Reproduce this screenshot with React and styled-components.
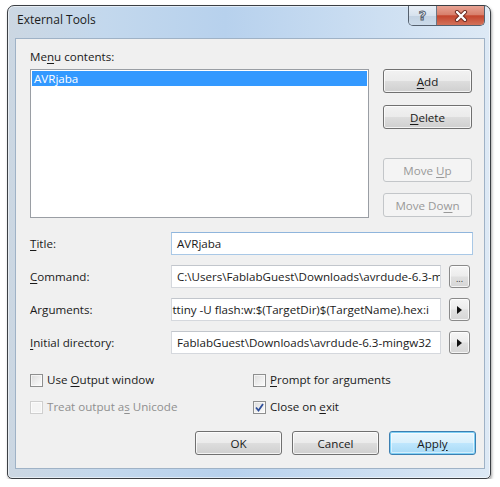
import React from "react";
import styled, { createGlobalStyle } from "styled-components";

const GlobalStyle = createGlobalStyle`
  body {
    margin: 0;
    background: #ffffff;
    font-family: "Open Sans", "Noto Sans", sans-serif;
    font-size: 11.6px;
    color: #1a1a1a;
  }
`;

const Mn = ({ children }) => <Under>{children}</Under>;

const TriangleIcon = () => (
  <svg width="5" height="8" viewBox="0 0 5 8">
    <path d="M0 0 L5 4 L0 8 Z" fill="#111" />
  </svg>
);

const CloseGlyph = () => (
  <svg width="16" height="12" viewBox="0 0 16 12">
    <path d="M4 2 L12 10 M12 2 L4 10" stroke="#6b2a20" strokeWidth="4.2" strokeLinecap="round" />
    <path d="M4 2 L12 10 M12 2 L4 10" stroke="#ffffff" strokeWidth="2.4" strokeLinecap="round" />
  </svg>
);

const CheckMark = () => (
  <svg width="9" height="9" viewBox="0 0 9 9">
    <path d="M1 4.5 L3.5 7.5 L8 1" stroke="#2f4f9a" strokeWidth="1.8" fill="none" />
  </svg>
);

const CheckBox = ({ checked, disabled, children }) => (
  <CheckLine $disabled={disabled}>
    <Box $disabled={disabled}>{checked && <CheckMark />}</Box>
    <span>{children}</span>
  </CheckLine>
);

export default function App() {
  return (
    <>
      <GlobalStyle />
      <Window>
        <TitleBar>
          <Caption>External Tools</Caption>
          <CaptionButtons>
            <HelpButton>?</HelpButton>
            <CloseButton>
              <CloseGlyph />
            </CloseButton>
          </CaptionButtons>
        </TitleBar>
        <Client>
          <Label>
            Me<Mn>n</Mn>u contents:
          </Label>
          <ListRow>
            <ListBox>
              <ListItem $selected>AVRjaba</ListItem>
            </ListBox>
            <SideButtons>
              <Button>
                <Mn>A</Mn>dd
              </Button>
              <Button $gap={12}>
                <Mn>D</Mn>elete
              </Button>
              <Button $gap={29} disabled>
                Move <Mn>U</Mn>p
              </Button>
              <Button $gap={11} disabled>
                Move Do<Mn>w</Mn>n
              </Button>
            </SideButtons>
          </ListRow>

          <Fields>
            <FieldLabel>
              <Mn>T</Mn>itle:
            </FieldLabel>
            <TextBox $focused $wide>
              <span>AVRjaba</span>
            </TextBox>

            <FieldLabel>
              <Mn>C</Mn>ommand:
            </FieldLabel>
            <TextBox>
              <span>C:\Users\FablabGuest\Downloads\avrdude-6.3-mingw32\avrdude.exe</span>
            </TextBox>
            <SmallButton>
              <Dots>...</Dots>
            </SmallButton>

            <FieldLabel>
              Ar<Mn>g</Mn>uments:
            </FieldLabel>
            <TextBox $shift={-11}>
              <span>attiny -U flash:w:$(TargetDir)$(TargetName).hex:i</span>
            </TextBox>
            <SmallButton>
              <TriangleIcon />
            </SmallButton>

            <FieldLabel>
              <Mn>I</Mn>nitial directory:
            </FieldLabel>
            <TextBox>
              <span>FablabGuest\Downloads\avrdude-6.3-mingw32</span>
            </TextBox>
            <SmallButton>
              <TriangleIcon />
            </SmallButton>
          </Fields>

          <Options>
            <CheckBox>
              Use <Mn>O</Mn>utput window
            </CheckBox>
            <CheckBox>
              <Mn>P</Mn>rompt for arguments
            </CheckBox>
            <CheckBox disabled>
              Treat output a<Mn>s</Mn> Unicode
            </CheckBox>
            <CheckBox checked>
              Close on <Mn>e</Mn>xit
            </CheckBox>
          </Options>

          <Footer>
            <Button $footer>OK</Button>
            <Button $footer>Cancel</Button>
            <Button $footer $default>
              Appl<Mn>y</Mn>
            </Button>
          </Footer>
        </Client>
      </Window>
    </>
  );
}

const Under = styled.span`
  text-decoration: underline;
  text-underline-offset: 2px;
`;

const Window = styled.div`
  margin: 5px 0 0 7px;
  width: 484px;
  box-sizing: border-box;
  border: 1px solid #3b3f44;
  border-radius: 7px 7px 5px 5px;
  padding: 0 5px 9px 7px;
  background: linear-gradient(
    90deg,
    #ccd7e2 0%,
    #c3d8ed 20%,
    #b7d1ed 45%,
    #c8dcf1 70%,
    #dde9f5 100%
  );
  box-shadow: inset 0 0 0 1px rgba(255, 255, 255, 0.55),
    1px 2px 3px rgba(0, 0, 0, 0.35);
  display: flex;
  flex-direction: column;
`;

const TitleBar = styled.div`
  height: 32px;
  display: flex;
  align-items: flex-start;
`;

const Caption = styled.div`
  margin: 6px 0 0 2px;
  line-height: 16px;
  font-size: 12px;
  color: #1c1c1c;
`;

const CaptionButtons = styled.div`
  margin-left: auto;
  display: flex;
  height: 19px;
  border: 1px solid #55606e;
  border-top: none;
  border-radius: 0 0 5px 5px;
  overflow: hidden;
`;

const HelpButton = styled.div`
  width: 27px;
  display: flex;
  align-items: center;
  justify-content: center;
  background: linear-gradient(#e9eff6 0%, #d7e2ee 50%, #c3d2e2 51%, #ccdbea 100%);
  border-right: 1px solid #6b7684;
  font-family: "DejaVu Sans", sans-serif;
  font-weight: bold;
  font-size: 13px;
  color: #eef3f8;
  -webkit-text-stroke: 1px #56616e;
`;

const CloseButton = styled.div`
  width: 47px;
  display: flex;
  align-items: center;
  justify-content: center;
  background: linear-gradient(#e8a394 0%, #d8806c 45%, #c4452d 52%, #d2725a 100%);
`;

const Client = styled.div`
  border: 1px solid #9fb2c6;
  background: #f0f0f0;
  padding: 10px 8px 13px 14px;
  display: flex;
  flex-direction: column;
`;

const Label = styled.div`
  line-height: 16px;
  margin-bottom: 4px;
`;

const ListRow = styled.div`
  display: flex;
  align-items: flex-start;
`;

const ListBox = styled.div`
  width: 339px;
  height: 149px;
  box-sizing: border-box;
  border: 1px solid #9a9ea4;
  background: #ffffff;
  padding: 1px;
`;

const ListItem = styled.div`
  height: 15px;
  line-height: 15px;
  padding-left: 2px;
  background: ${(p) => (p.$selected ? "#3399ff" : "transparent")};
  color: ${(p) => (p.$selected ? "#ffffff" : "#000000")};
`;

const SideButtons = styled.div`
  margin-left: 14px;
  display: flex;
  flex-direction: column;
`;

const Button = styled.button`
  width: ${(p) => (p.$footer ? "87px" : "89px")};
  height: 24px;
  margin-top: ${(p) => p.$gap || 0}px;
  padding: 0;
  box-sizing: border-box;
  border: 1px solid #707070;
  border-radius: 3px;
  background: linear-gradient(#f2f2f2 0%, #ebebeb 48%, #dddddd 52%, #cfcfcf 100%);
  box-shadow: inset 0 0 0 1px rgba(255, 255, 255, 0.75);
  font-family: "Open Sans", "Noto Sans", sans-serif;
  font-size: 11.6px;
  color: #1a1a1a;

  ${(p) =>
    p.$default &&
    `
    border-color: #3c7fb1;
    background: linear-gradient(#eaf6fd 0%, #d9f0fc 48%, #bee6fd 52%, #a7d9f5 100%);
    box-shadow: inset 0 0 0 1px #7fd0f5, inset 0 0 0 2px rgba(255,255,255,.5);
  `}

  &:disabled {
    border-color: #c3c6c9;
    background: #f4f4f4;
    box-shadow: none;
    color: #999999;
  }
`;

const Fields = styled.div`
  margin: 14px 6px 0 0;
  display: grid;
  grid-template-columns: 133px 1fr 21px;
  grid-auto-rows: 23px;
  column-gap: 8px;
  row-gap: 10px;
  align-items: center;
`;

const FieldLabel = styled.div`
  line-height: 16px;
`;

const TextBox = styled.div`
  grid-column: ${(p) => (p.$wide ? "2 / 4" : "auto")};
  margin-right: ${(p) => (p.$wide ? "-3px" : "0")};
  height: 23px;
  box-sizing: border-box;
  border: 1px solid ${(p) => (p.$focused ? "#a9c8e6" : "#d5d8dd")};
  border-top-color: ${(p) => (p.$focused ? "#8fb5dc" : "#c2c6cc")};
  background: #ffffff;
  padding: 0 5px;
  display: flex;
  align-items: center;
  overflow: hidden;
  white-space: nowrap;

  span {
    margin-left: ${(p) => p.$shift || 0}px;
  }
`;

const SmallButton = styled.div`
  width: 21px;
  height: 23px;
  box-sizing: border-box;
  border: 1px solid #8a8a8a;
  border-radius: 3px;
  background: linear-gradient(#f6f6f6 0%, #ececec 48%, #e0e0e0 52%, #d6d6d6 100%);
  box-shadow: inset 0 0 0 1px rgba(255, 255, 255, 0.75);
  display: flex;
  align-items: center;
  justify-content: center;
`;

const Dots = styled.span`
  font-size: 9px;
  line-height: 1;
  margin-top: 3px;
  color: #333;
`;

const Options = styled.div`
  margin-top: 18px;
  display: grid;
  grid-template-columns: 223px 1fr;
  grid-auto-rows: 16px;
  row-gap: 11px;
`;

const CheckLine = styled.div`
  display: flex;
  align-items: center;
  gap: 4px;
  line-height: 16px;
  color: ${(p) => (p.$disabled ? "#8f8f8f" : "#1a1a1a")};
`;

const Box = styled.div`
  width: 13px;
  height: 13px;
  box-sizing: border-box;
  border: 1px solid ${(p) => (p.$disabled ? "#cfcfcf" : "#8e8f8f")};
  background: ${(p) =>
    p.$disabled
      ? "#f4f4f4"
      : "linear-gradient(135deg, #dcdcdc 0%, #f0f0f0 60%, #fbfbfb 100%)"};
  box-shadow: inset 0 0 0 1px rgba(255, 255, 255, 0.6);
  display: flex;
  align-items: center;
  justify-content: center;
`;

const Footer = styled.div`
  margin-top: 16px;
  display: flex;
  justify-content: flex-end;
  gap: 10px;
`;
